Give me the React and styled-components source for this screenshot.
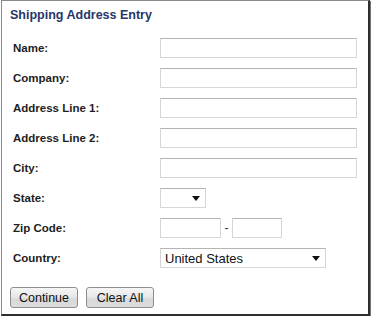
import React from 'react';
import styled, { createGlobalStyle } from 'styled-components';

const GlobalStyle = createGlobalStyle`
  html, body {
    margin: 0;
    padding: 0;
    background: #fff;
    font-family: "Liberation Sans", Arial, sans-serif;
  }
`;

const Panel = styled.div`
  box-sizing: border-box;
  width: 369px;
  height: 316px;
  margin-left: 1px;
  border: 1px solid #8a8a8a;
  border-right: 2px solid #2e2e2e;
  border-bottom: 2px solid #2e2e2e;
  box-shadow: 1px 1px 0 #777;
  background: #fff;
  padding: 5px 0 0 8px;
`;

const Heading = styled.h2`
  margin: 0;
  height: 18px;
  font-size: 12.5px;
  font-weight: bold;
  color: #27366a;
  line-height: 18px;
`;

const Form = styled.form`
  display: grid;
  grid-template-columns: 147px 1fr;
  grid-auto-rows: 20px;
  row-gap: 10px;
  margin-top: 14px;
  padding-left: 3px;
`;

const Label = styled.label`
  font-size: 11.5px;
  font-weight: bold;
  color: #1e1e1e;
  line-height: 20px;
  align-self: center;
`;

const TextBox = styled.input`
  box-sizing: border-box;
  width: ${p => p.$w || 197}px;
  height: 20px;
  border: 1px solid #d6d6d6;
  border-top-color: #b4b4b4;
  background: #fff;
  padding: 0 4px;
  margin: 0;
  font-family: inherit;
  font-size: 13px;
  outline: none;
`;

const Pair = styled.div`
  display: flex;
  align-items: center;
`;

const Dash = styled.span`
  width: 11px;
  text-align: center;
  font-size: 12px;
  color: #333;
`;

const SelectWrap = styled.div`
  position: relative;
  width: ${p => p.$w}px;
  height: 20px;
`;

const Select = styled.select`
  appearance: none;
  -webkit-appearance: none;
  box-sizing: border-box;
  width: 100%;
  height: 20px;
  margin: 0;
  border: 1px solid #d6d6d6;
  border-top-color: #b4b4b4;
  border-radius: 0;
  background: #fff;
  padding: 0 0 0 4px;
  font-family: inherit;
  font-size: 13px;
  color: #111;
  outline: none;
`;

const Arrow = styled.svg`
  position: absolute;
  right: 6px;
  top: 8px;
  pointer-events: none;
`;

const Buttons = styled.div`
  display: flex;
  gap: 8px;
  margin-top: 19px;
`;

const Button = styled.button`
  box-sizing: border-box;
  width: 68px;
  height: 21px;
  margin: 0;
  padding: 0;
  border: 1px solid #8e8e8e;
  border-radius: 3px;
  background: linear-gradient(#f6f6f6 0%, #e6e6e6 50%, #d9d9d9 51%, #dcdcdc 100%);
  font-family: inherit;
  font-size: 12.5px;
  color: #111;
`;

const DropDown = ({ width, children }) => (
  <SelectWrap $w={width}>
    <Select>{children}</Select>
    <Arrow width="8" height="5" viewBox="0 0 8 5">
      <path d="M0 0h8L4 5z" fill="#111" />
    </Arrow>
  </SelectWrap>
);

const fields = ['Name:', 'Company:', 'Address Line 1:', 'Address Line 2:', 'City:'];

export default function App() {
  return (
    <>
      <GlobalStyle />
      <Panel>
        <Heading>Shipping Address Entry</Heading>
        <Form>
          {fields.map(f => (
            <React.Fragment key={f}>
              <Label>{f}</Label>
              <TextBox type="text" />
            </React.Fragment>
          ))}
          <Label>State:</Label>
          <DropDown width={46}><option></option></DropDown>
          <Label>Zip Code:</Label>
          <Pair>
            <TextBox type="text" $w={61} />
            <Dash>-</Dash>
            <TextBox type="text" $w={50} />
          </Pair>
          <Label>Country:</Label>
          <DropDown width={166}><option>United States</option></DropDown>
        </Form>
        <Buttons>
          <Button type="button">Continue</Button>
          <Button type="button">Clear All</Button>
        </Buttons>
      </Panel>
    </>
  );
}
